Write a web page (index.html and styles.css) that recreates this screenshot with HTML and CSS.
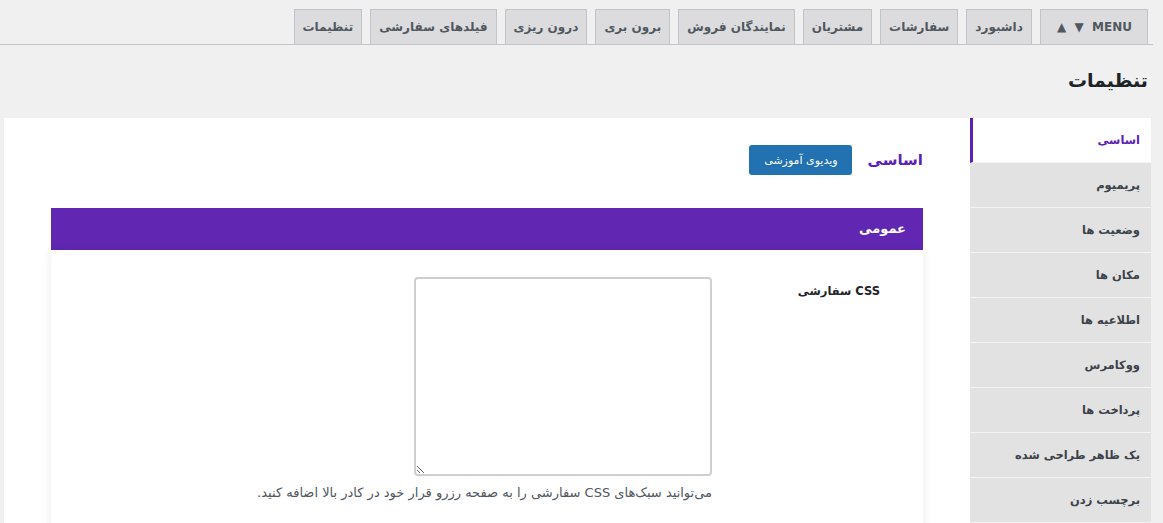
FILE: index.html
```html
<!DOCTYPE html>
<html lang="fa" dir="rtl">
<head>
    <meta charset="UTF-8" />
    <title>تنظیمات</title>
    <link rel="stylesheet" href="styles.css">
</head>
<body>
    <nav class="tabs">
        <a class="tab tab-menu">MENU&nbsp;&nbsp;&#9660;&nbsp;&nbsp;&#9650;</a>
        <a class="tab">داشبورد</a>
        <a class="tab">سفارشات</a>
        <a class="tab">مشتریان</a>
        <a class="tab">نمایندگان فروش</a>
        <a class="tab">برون بری</a>
        <a class="tab">درون ریزی</a>
        <a class="tab">فیلدهای سفارشی</a>
        <a class="tab">تنظیمات</a>
    </nav>

    <h1 class="page-title">تنظیمات</h1>

    <div class="layout">
        <ul class="side">
            <li class="side-item active">اساسی</li>
            <li class="side-item">پریمیوم</li>
            <li class="side-item">وضعیت ها</li>
            <li class="side-item">مکان ها</li>
            <li class="side-item">اطلاعیه ها</li>
            <li class="side-item">ووکامرس</li>
            <li class="side-item">پرداخت ها</li>
            <li class="side-item">یک ظاهر طراحی شده</li>
            <li class="side-item">برچسب زدن</li>
        </ul>

        <main class="content">
            <div class="section-head">
                <h2>اساسی</h2>
                <button class="btn-video">ویدیوی آموزشی</button>
            </div>

            <div class="box-title">عمومی</div>
            <div class="box">
                <div class="field">
                    <label class="field-label">CSS سفارشی</label>
                    <div class="field-input">
                        <textarea class="css-area"></textarea>
                        <p class="hint">می‌توانید سبک‌های CSS سفارشی را به صفحه رزرو قرار خود در کادر بالا اضافه کنید.</p>
                    </div>
                </div>
            </div>
        </main>
    </div>
</body>
</html>
```

FILE: styles.css
```css
body {
    margin: 0;
    background: #f0f0f1;
    font-family: "DejaVu Sans", sans-serif;
    color: #1d2327;
    overflow: hidden;
}

.tabs {
    display: flex;
    gap: 8px;
    margin-right: 10px;
    padding: 9px 5px 0 0;
    border-bottom: 1px solid #c3c4c7;
}

.tab {
    height: 34px;
    line-height: 34px;
    padding: 0 8px;
    background: #dcdcde;
    border: 1px solid #c3c4c7;
    border-bottom: none;
    font-size: 12px;
    font-weight: bold;
    color: #50575e;
    white-space: nowrap;
}

.tab-menu {
    padding: 0 15px 0 16px;
}

.page-title {
    margin: 21px 15px 0 0;
    font-size: 19px;
    font-weight: bold;
    line-height: 28px;
}

.layout {
    display: flex;
    margin: 24px 12px 0 0;
    height: 410px;
}

.side {
    list-style: none;
    margin: 0;
    padding: 0;
    width: 181px;
    flex-shrink: 0;
}

.side-item {
    height: 44px;
    line-height: 44px;
    padding-right: 11px;
    background: #e2e2e2;
    border-bottom: 1px solid #f4f4f4;
    font-size: 11.5px;
    font-weight: bold;
    color: #3c434a;
}

.side-item.active {
    background: #fff;
    color: #5b21b6;
    border-left: 3px solid #5b21b6;
}

.content {
    flex: 1;
    background: #fff;
    margin-left: 4px;
    padding: 27px 47px 0 47px;
}

.section-head {
    display: flex;
    align-items: center;
    gap: 16px;
    height: 30px;
}

.section-head h2 {
    margin: 0;
    font-size: 15px;
    font-weight: bold;
    color: #5b21b6;
}

.btn-video {
    height: 30px;
    padding: 0 14px 0 15px;
    background: #2271b1;
    border: none;
    border-radius: 3px;
    color: #fff;
    font-family: inherit;
    font-size: 11px;
}

.box-title {
    margin-top: 33px;
    height: 42px;
    line-height: 42px;
    padding-right: 17px;
    background: #6127b3;
    color: #fff;
    font-size: 13px;
    font-weight: bold;
}

.box {
    background: #fff;
    box-shadow: 0 0 10px rgba(0, 0, 0, 0.08);
    padding: 27px 0 40px;
}

.field {
    display: flex;
}

.field-label {
    width: 168px;
    padding-right: 43px;
    padding-top: 7px;
    font-size: 11.5px;
    font-weight: bold;
    color: #1d2327;
}

.css-area {
    display: block;
    width: 298px;
    height: 199px;
    box-sizing: border-box;
    border: 2px solid #cfcfcf;
    border-radius: 4px;
    background: #fff;
    margin: 0;
}

.hint {
    margin: 9px 0 0;
    font-size: 13px;
    color: #50575e;
    white-space: nowrap;
}
```
